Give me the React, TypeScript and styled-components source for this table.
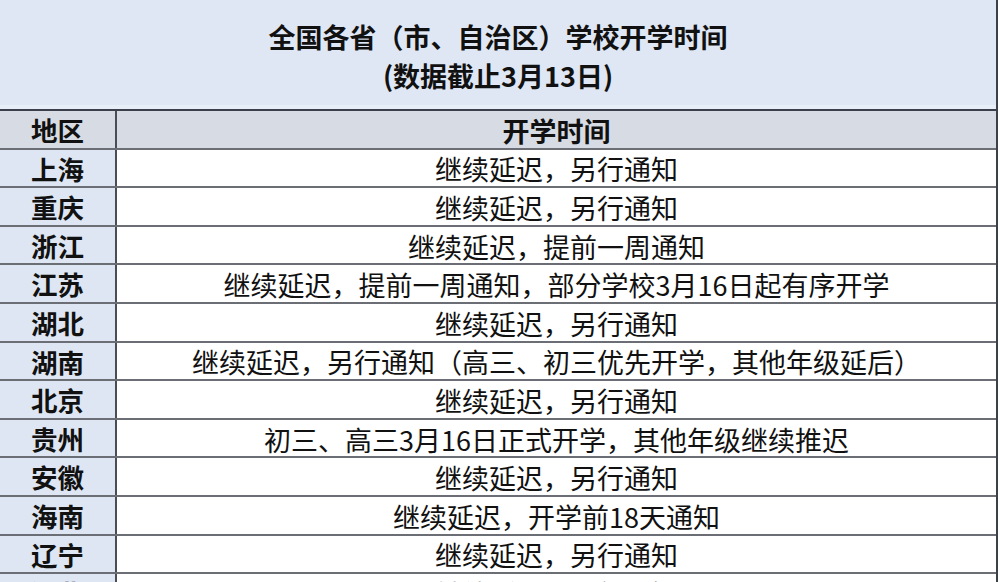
import styled, { createGlobalStyle } from "styled-components";

const GlobalStyle = createGlobalStyle`
  html, body {
    margin: 0;
    padding: 0;
    background: #ffffff;
  }
  body {
    font-family: "Noto Sans CJK SC", "Noto Sans", sans-serif;
    color: #111111;
    overflow: hidden;
  }
`;

const Sheet = styled.div`
  width: 998px;
  border-right: 2px solid #3c4048;
  box-sizing: border-box;
`;

const TitleBlock = styled.div`
  height: 111px;
  background: #dfe7f4;
  border-bottom: 2px solid #3a3f4a;
  box-shadow: inset 0 -4px 0 #e8eef8;
  box-sizing: border-box;
  display: flex;
  flex-direction: column;
  align-items: center;
  justify-content: center;
  padding-top: 2px;
`;

const TitleLine = styled.div`
  font-size: 27px;
  font-weight: 700;
  line-height: 39px;
`;

const Row = styled.div<{ $header?: boolean }>`
  display: grid;
  grid-template-columns: 117px 1fr;
  height: 38.6px;
  box-sizing: border-box;
  border-bottom: 2px solid #6b6e74;
  background: ${(p) => (p.$header ? "#d7dbe3" : "#ffffff")};
`;

const RegionCell = styled.div<{ $header?: boolean }>`
  background: ${(p) => (p.$header ? "#d7dbe3" : "#dde6f2")};
  border-right: 2px solid #4a4d54;
  display: flex;
  align-items: center;
  justify-content: center;
  font-size: 26.5px;
  font-weight: 700;
  line-height: 1;
  padding-top: 2px;
`;

const TimeCell = styled.div<{ $header?: boolean }>`
  display: flex;
  align-items: center;
  justify-content: center;
  font-size: 27px;
  font-weight: ${(p) => (p.$header ? 700 : 400)};
  line-height: 1;
  white-space: nowrap;
  padding-top: 2px;
`;

const rows: [string, string][] = [
  ["上海", "继续延迟，另行通知"],
  ["重庆", "继续延迟，另行通知"],
  ["浙江", "继续延迟，提前一周通知"],
  ["江苏", "继续延迟，提前一周通知，部分学校3月16日起有序开学"],
  ["湖北", "继续延迟，另行通知"],
  ["湖南", "继续延迟，另行通知（高三、初三优先开学，其他年级延后）"],
  ["北京", "继续延迟，另行通知"],
  ["贵州", "初三、高三3月16日正式开学，其他年级继续推迟"],
  ["安徽", "继续延迟，另行通知"],
  ["海南", "继续延迟，开学前18天通知"],
  ["辽宁", "继续延迟，另行通知"],
  ["河北", "继续延迟，另行通知"],
];

export default function App() {
  return (
    <>
      <GlobalStyle />
      <Sheet>
        <TitleBlock>
          <TitleLine>全国各省（市、自治区）学校开学时间</TitleLine>
          <TitleLine>(数据截止3月13日)</TitleLine>
        </TitleBlock>
        <Row $header>
          <RegionCell $header>地区</RegionCell>
          <TimeCell $header>开学时间</TimeCell>
        </Row>
        {rows.map(([region, time]) => (
          <Row key={region}>
            <RegionCell>{region}</RegionCell>
            <TimeCell>{time}</TimeCell>
          </Row>
        ))}
      </Sheet>
    </>
  );
}
